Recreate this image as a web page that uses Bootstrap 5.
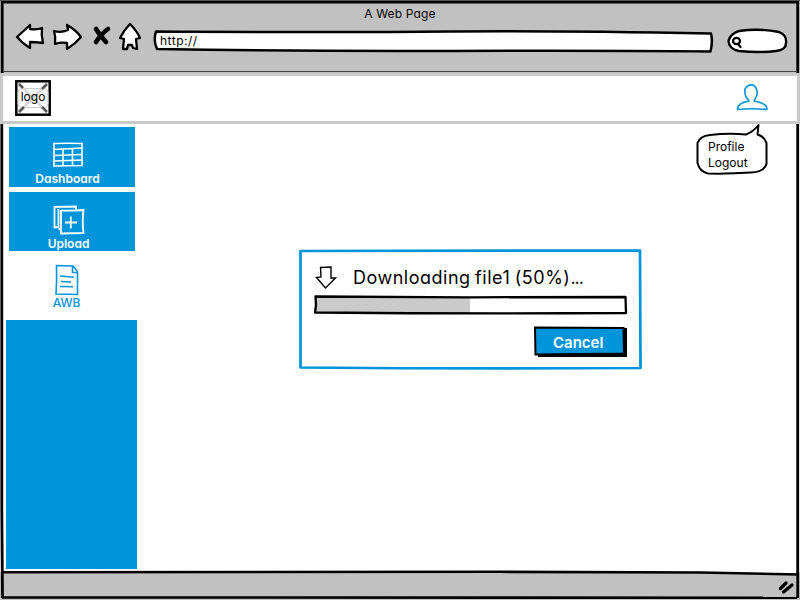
<!DOCTYPE html>
<html lang="en">
<head>
<meta charset="utf-8">
<title>A Web Page</title>
<meta name="viewport" content="width=device-width, initial-scale=1">
<link href="https://cdn.jsdelivr.net/npm/bootstrap@5.3.0/dist/css/bootstrap.min.css" rel="stylesheet">
<style>
:root{--blue:#0094db;--chrome:#c1c1c1}
body{margin:0;background:#fff;color:#000;font-family:Inter,Lato,sans-serif;font-feature-settings:"cv11" 1;font-size:12px;line-height:16px}
svg{display:block;flex:none;overflow:visible}
.ink{fill:none;stroke:#000;stroke-width:3;stroke-linejoin:round;stroke-linecap:round}
.ink-white{fill:#fff}
.window{width:800px;height:600px;overflow:hidden}
.window-frame{z-index:5;pointer-events:none}
.chrome-top{height:73px;background:var(--chrome);padding:6px 0 0 15px}
.page-title{height:16px;margin-left:-15px;font-size:12px}
.chrome-row{height:40px}
.address{width:560px;height:23px;margin-left:11px}
.address-text{left:6px;top:3px}
.search-box{margin-left:13px}
.site-bar{height:51px;border:3px solid #c9c9c9;padding:4px 29px 0 12px;z-index:6}
.logo-box{width:36px;height:36px}
.logo-text{left:0;top:9px;width:36px}
.workspace{height:448px;padding-left:6px}
.side{width:131px}
.tile{width:126px;margin-left:3px;padding-right:9px;color:#fff;font-weight:600}
.tile-dash{height:60px;margin-top:3px;background:var(--blue);padding-top:15px}
.tile-up{height:59px;margin-top:5px;background:var(--blue);padding-top:14px;padding-right:7px}
.tile-awb{height:69px;color:var(--blue);padding-top:13px;padding-right:11px;font-weight:500}
.side-fill{height:249px;background:var(--blue)}
.stage{padding:125px 0 0 162px}
.dialog-box{width:343px;height:120px;padding:16px 15px 0 15px}
.dialog-title{font-size:18px;line-height:26px;margin-left:17px}
.bar-track{width:313px;height:20px;margin-top:4px}
.bar-fill{left:2px;top:2px;height:16px;background:#cacaca}
.btn-sketch,.btn-sketch:hover{width:94px;height:31px;margin-top:11px;padding:0;border:0;border-radius:0;color:#fff;font-size:15px;line-height:29px;font-weight:600}
.btn-label{left:20px;top:2px}
.bubble{width:74px;height:52px;left:695px;top:123px;z-index:7}
.bubble-text{left:13px;top:16px}
.chrome-foot{height:28px;background:var(--chrome)}
.t-title{letter-spacing:.15px}.t-url{letter-spacing:.5px}.t-dl{letter-spacing:.5px;word-spacing:-1px}.t-dots{letter-spacing:-1px}
</style>
</head>
<body>
<div class="window position-relative d-flex flex-column bg-white">
  <header class="chrome-top">
    <div class="page-title text-center"><span class="t-title">A Web Page</span></div>
    <div class="chrome-row d-flex align-items-start">
      <svg width="128" height="36" viewBox="15 22 128 36">
        <g class="ink" style="stroke-width:2.3">
          <path class="ink-white" d="M17 37 30 25V29Q37 30 42 28Q41 35 43 43Q36 42 30 42V48Q23 44 17 37Z"/>
          <path class="ink-white" d="M54 31Q61 33 68 30L67 25Q76 30 81 37Q75 44 67 49V43Q61 42 55 44Q56 37 54 31Z"/>
          <path class="ink-white" d="M130 24Q137 31 140 38L136 39 137 49 133 48 132 45H128L127 49H123L124 39 120 38Q124 30 130 24Z"/>
        </g>
        <path d="M96 29Q99 34 106 42M108 29Q101 34 96 42" fill="none" stroke="#000" stroke-width="4.600" stroke-linecap="round"/>
      </svg>
      <div class="address position-relative mt-2">
        <svg width="560" height="23" viewBox="154 30 560 23"><path class="ink ink-white" style="stroke-width:2.500" d="M156 31.500Q340 32.500 450 31.500T711 33.500Q713 41 710.500 51.500Q600 50.500 450 51T157 49Q153 41 156 31.500Z"/></svg>
        <span class="address-text position-absolute t-url">http://</span>
      </div>
      <svg class="search-box" width="61" height="30" viewBox="727 22 61 30"><path class="ink ink-white" style="stroke-width:2.400" d="M739 31Q759 28 779 32Q787 35 786 43Q786 50 776 51Q759 53 739 51Q729 49 728.500 41Q730 34 739 31Z"/><g class="ink" style="stroke-width:2.300"><ellipse cx="736.500" cy="41" rx="3.500" ry="3.200"/><path d="M738 44 740.500 47"/></g></svg>
    </div>
  </header>

  <nav class="site-bar position-relative bg-white d-flex justify-content-between align-items-start">
    <div class="logo-box position-relative">
      <svg width="36" height="36" viewBox="15 80 36 36"><rect x="16.300" y="81.300" width="33.400" height="33.400" fill="#fff" stroke="#000" stroke-width="2.500"/><rect x="18" y="88.500" width="30" height="19" rx="4" fill="#fff" stroke="#ccc"/><path d="M19 84 47 112M47 84 19 112" stroke="#d8d8d8" stroke-width="2.500"/><path d="M19 84l4 4M47 84l-5 5M19 112l5-5M47 112l-5-5" stroke="#555" stroke-width="2.500"/></svg>
      <span class="logo-text position-absolute text-center">logo</span>
    </div>
    <svg class="mt-1" width="32" height="28" viewBox="736 84 32 28"><path d="M749 101Q744 96 745 89Q748 84 753 85Q758 88 757 95L754 101Q767 103 767 109.500Q752 108 737.500 109.500Q737 103 749 101Z" fill="#fff" stroke="#0094db" stroke-width="1.600" stroke-linejoin="round"/></svg>
  </nav>

  <main class="workspace d-flex">
    <aside class="side d-flex flex-column">
      <div class="tile tile-dash d-flex flex-column align-items-center">
        <svg width="32" height="27" viewBox="52 142 32 27" fill="none" stroke="#fff" stroke-width="1.600"><path d="M54 143.500Q68 143 82 143.500V165.500L54 166Z"/><path d="M54 149.500 82 148M54 155.500 82 154.500M54 161 82 160M63 149V166M72.500 149V166"/></svg>
        <span class="mt-1 lh-1">Dashboard</span>
      </div>
      <div class="tile tile-up d-flex flex-column align-items-center">
        <svg width="32" height="30" viewBox="53 206 32 30" fill="none" stroke="#fff" stroke-width="1.800"><path d="M58 227 54.500 227.500V206.800L76 206.500V209M58.500 228V209M58.500 228.500 61 230M61 210.500Q70 211 83.500 210Q82 220 83.500 233L61 233.500V210M70.800 216.500V228.500M65 222.500H77"/></svg>
        <span>Upload</span>
      </div>
      <div class="tile tile-awb d-flex flex-column align-items-center">
        <svg width="26" height="31" viewBox="54 264 26 31" fill="none" stroke="#0094db" stroke-width="1.600"><path d="M56.500 265.500 73 266 77.500 271.500V294.500L56 294Q57 280 56.500 265.500ZM72.500 266V272.500H77.500M60 276 74 277.200M61 281.500 71 282M60 286.500 73 286.800"/></svg>
        <span>AWB</span>
      </div>
      <div class="side-fill"></div>
    </aside>

    <section class="stage">
      <div class="dialog-box position-relative">
        <svg class="position-absolute top-0 start-0" width="343" height="120" viewBox="299 249 343 120"><path d="M300.500 251 640 250.500 640.500 368Q470 369 300.500 367.500Z" fill="none" stroke="#0094db" stroke-width="2.700" stroke-linejoin="round"/></svg>
        <div class="position-relative">
          <div class="d-flex align-items-center">
            <svg width="22" height="24" viewBox="314 265 22 24"><path d="M320.500 266.500 331 266 331 277H335.500L325.500 287 316.500 276.500 321 276Z" fill="#fff" stroke="#000" stroke-width="1.400"/></svg>
            <span class="dialog-title text-nowrap t-dl">Downloading file1 (50%)<span class="t-dots">...</span></span>
          </div>
          <div class="bar-track position-relative">
            <div class="bar-fill position-absolute" style="width:154px"></div>
            <svg class="position-relative" width="313" height="20" viewBox="314 296 313 20"><path d="M315.500 297.500 470 298.300 625.500 298 626 314Q470 315 315 313.500L316 306Z" class="ink" style="stroke-width:2.300"/></svg>
          </div>
          <div class="d-flex justify-content-end">
            <button type="button" class="btn btn-sketch position-relative">
              <svg width="94" height="31" viewBox="533 327 94 31"><path d="M538 331 627 329V358H538Z"/><path d="M535 328.500 623.500 329 624 354.500 535.500 355.500Z" fill="#0094db" stroke="#000" stroke-width="2"/></svg>
              <span class="btn-label position-absolute">Cancel</span>
            </button>
          </div>
        </div>
      </div>
    </section>
  </main>

  <footer class="chrome-foot d-flex justify-content-end">
    <svg width="22" height="28" viewBox="778 572 22 28"><path d="M780.500 588.500 786 583M783.500 592 792 585" stroke="#000" stroke-width="3.300" stroke-linecap="round"/></svg>
  </footer>

  <div class="bubble position-absolute">
    <svg width="74" height="52" viewBox="695 123 74 52"><path class="ink ink-white" style="stroke-width:2" d="M710 135Q728 133 746 134.500Q753 132 758.500 125L757.500 134.500Q764 136 766.500 143V164Q764 172 751 172.500Q728 174 708 173.500Q700 172 697.500 163V143Q700 136 710 135Z"/></svg>
    <div class="bubble-text position-absolute">Profile<br>Logout</div>
  </div>

  <svg class="window-frame position-absolute top-0 start-0" width="800" height="600" viewBox="0 0 800 600" fill="none" stroke="#000">
    <path d="M796 574.500 700 572.500 500 571.800V570H796Z" fill="#fff" stroke="none"/>
    <path d="M1 2.200H799" stroke-width="2.600"/>
    <path d="M0 .500H800" stroke="#555"/>
    <path d="M2.200 1V74M1.800 122V510L2.500 598" stroke-width="2.800"/>
    <path d="M797.700 1V598" stroke-width="2.800"/>
    <path d="M3 71.500H797" stroke="#444" stroke-width="1"/>
    <path d="M2 572.300 500 571.800 700 572.500 798 574.500" stroke-width="2.600"/>
    <path d="M2 597.500 797 597.700" stroke-width="2.600"/>
  </svg>
</div>
<script src="https://cdn.jsdelivr.net/npm/bootstrap@5.3.0/dist/js/bootstrap.bundle.min.js"></script>
</body>
</html>
